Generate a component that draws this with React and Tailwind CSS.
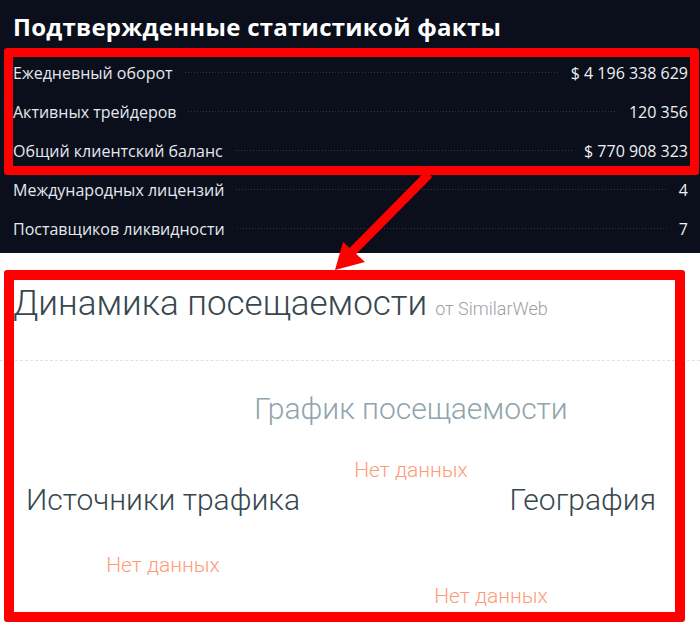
const facts = [
  { label: 'Ежедневный оборот', value: '$ 4 196 338 629' },
  { label: 'Активных трейдеров', value: '120 356' },
  { label: 'Общий клиентский баланс', value: '$ 770 908 323' },
  { label: 'Международных лицензий', value: '4' },
  { label: 'Поставщиков ликвидности', value: '7' },
];

const NoData = ({ className = '' }) => (
  <p className={`text-[21px] leading-[24px] font-light text-[#ff9a7a] ${className}`}>Нет данных</p>
);

export default function App() {
  return (
    <div className="relative w-[700px] h-[637px] overflow-hidden bg-white">
      {/* dark stats block */}
      <section className="h-[253px] bg-[#0a0f1b] pl-[13px] pr-[12px] pt-[11px] font-['Open_Sans',sans-serif]">
        <h2 className="text-[24px] leading-[32px] font-bold text-white tracking-[0.27px]">
          Подтвержденные статистикой факты
        </h2>
        <ul className="mt-[10px]">
          {facts.map((f) => (
            <li key={f.label} className="flex items-center h-[39px] text-[16px] font-medium">
              <span className="text-[#e4e8ee]">{f.label}</span>
              <span className="flex-1 mx-[12px] h-px bg-[linear-gradient(to_right,#2e3544_1px,transparent_1px)] bg-[length:3px_1px]" />
              <span className="text-[#eef0f4]">{f.value}</span>
            </li>
          ))}
        </ul>
      </section>

      {/* attendance block */}
      <section className="font-['Roboto',sans-serif]">
        <div className="flex items-baseline pl-[13px] pt-[31px] h-[107px]">
          <h2 className="text-[35px] leading-[40px] font-light text-[#37474f]">Динамика посещаемости</h2>
          <span className="ml-[8px] text-[18px] font-light text-[#9aa1a6]">от SimilarWeb</span>
        </div>
        <div className="border-t border-dashed border-[#dde3e8]" />

        <div className="pl-[122px] pt-[30px] text-center">
          <h3 className="text-[30px] leading-[36px] font-light text-[#90a4ae]">График посещаемости</h3>
          <NoData className="mt-[31px]" />
        </div>

        <div className="flex pl-[26px]">
          <div className="w-[274px] text-center">
            <h3 className="text-[30px] leading-[36px] font-light text-[#37474f] text-left">Источники трафика</h3>
            <NoData className="mt-[35px]" />
          </div>
          <div className="ml-[26px] w-[330px] text-center">
            <h3 className="text-[30px] leading-[36px] font-light text-[#37474f] text-right">География</h3>
            <NoData className="mt-[66px]" />
          </div>
        </div>
      </section>

      {/* annotation overlays */}
      <div className="absolute left-[4px] top-[48px] w-[695px] h-[127px] border-[9px] border-[#ff0000] rounded-[3px] pointer-events-none" />
      <div className="absolute left-[4px] top-[270px] w-[681px] h-[352px] border-[10px] border-[#ff0000] rounded-[3px] pointer-events-none" />
      <svg className="absolute left-0 top-0 pointer-events-none" width="700" height="637">
        <line x1="429" y1="174" x2="350" y2="254" stroke="#ff0000" strokeWidth="9" />
        <polygon points="335,270 343,242 365,262" fill="#ff0000" />
      </svg>
    </div>
  );
}
